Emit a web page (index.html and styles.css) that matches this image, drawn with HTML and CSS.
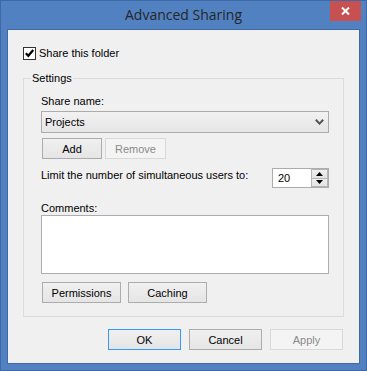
FILE: index.html
```html
<!DOCTYPE html>
<html lang="en">
<head>
    <meta charset="UTF-8">
    <meta name="viewport" content="width=device-width, initial-scale=1.0">
    <title>Advanced Sharing</title>
    <link rel="stylesheet" href="styles.css">
</head>
<body>

    <div class="window">
        <!-- Title bar -->
        <div class="titlebar">
            <span class="title">Advanced Sharing</span>
            <button class="close" aria-label="Close">
                <svg width="9" height="8" viewBox="0 0 9 8">
                    <path d="M1 0.5 L8 7.5 M8 0.5 L1 7.5" stroke="#fff" stroke-width="2" fill="none"/>
                </svg>
            </button>
        </div>

        <div class="client">
            <label class="check-row">
                <span class="checkbox">
                    <svg width="11" height="11" viewBox="0 0 11 11">
                        <path d="M1.8 5.2 L4.3 7.8 L9.2 2" stroke="#000" stroke-width="2.2" fill="none"/>
                    </svg>
                </span>
                Share this folder
            </label>

            <fieldset class="group">
                <legend>Settings</legend>

                <div class="field-label">Share name:</div>
                <div class="combo">
                    <span>Projects</span>
                    <svg width="9" height="6" viewBox="0 0 9 6">
                        <path d="M0.8 0.8 L4.5 4.6 L8.2 0.8" stroke="#555" stroke-width="2" fill="none"/>
                    </svg>
                </div>

                <div class="btn-row share-buttons">
                    <button class="btn btn-add">Add</button>
                    <button class="btn btn-remove" disabled>Remove</button>
                </div>

                <div class="limit-row">
                    <span class="limit-label">Limit the number of simultaneous users to:</span>
                    <div class="spin">
                        <span class="spin-value">20</span>
                        <div class="spin-buttons">
                            <span class="spin-btn">
                                <svg width="7" height="4" viewBox="0 0 7 4"><path d="M3.5 0 L7 4 L0 4 Z" fill="#000"/></svg>
                            </span>
                            <span class="spin-btn">
                                <svg width="7" height="4" viewBox="0 0 7 4"><path d="M0 0 L7 0 L3.5 4 Z" fill="#000"/></svg>
                            </span>
                        </div>
                    </div>
                </div>

                <div class="field-label comments-label">Comments:</div>
                <div class="textarea"></div>

                <div class="btn-row perm-buttons">
                    <button class="btn btn-wide">Permissions</button>
                    <button class="btn btn-wide">Caching</button>
                </div>
            </fieldset>

            <div class="dialog-buttons">
                <button class="btn btn-dialog btn-default">OK</button>
                <button class="btn btn-dialog">Cancel</button>
                <button class="btn btn-dialog" disabled>Apply</button>
            </div>
        </div>
    </div>

</body>
</html>
```

FILE: styles.css
```css
/* General Styles */
body {
    margin: 0;
    font-family: "Liberation Sans", Arial, sans-serif;
    font-size: 11px;
    color: #000;
}

/* Window frame */
.window {
    width: 367px;
    height: 371px;
    box-sizing: border-box;
    display: flex;
    flex-direction: column;
    background: #5181c1;
    border: 1px solid #3d6aa6;
}

.titlebar {
    position: relative;
    height: 28px;
    line-height: 28px;
    text-align: center;
}

.title {
    font-family: "Open Sans", "Liberation Sans", sans-serif;
    font-size: 14px;
    color: #262626;
}

.close {
    position: absolute;
    top: 0;
    right: 5px;
    width: 31px;
    height: 20px;
    padding: 0;
    border: none;
    background: #c75050;
    display: flex;
    align-items: center;
    justify-content: center;
}

/* Client area */
.client {
    flex: 1;
    margin: 0 6px 6px;
    padding: 17px 15px 0;
    background: #f0f0f0;
    border: 1px solid #3f6aa5;
}

.check-row {
    display: flex;
    align-items: flex-start;
    gap: 3px;
    height: 13px;
    line-height: 13px;
}

.checkbox {
    width: 13px;
    height: 13px;
    box-sizing: border-box;
    border: 1px solid #333;
    background: #fff;
    display: flex;
    align-items: center;
    justify-content: center;
}

/* Settings group */
.group {
    margin: 12px 0 0;
    padding: 10px 14px 13px 17px;
    min-width: 0;
    border: 1px solid #dcdcdc;
}

.group legend {
    margin-left: -10px;
    padding: 0 1px;
    line-height: 13px;
}

.field-label {
    line-height: 13px;
}

.combo {
    margin-top: 3px;
    height: 22px;
    box-sizing: border-box;
    border: 1px solid #acacac;
    background: linear-gradient(#f2f2f2, #e5e5e5);
    display: flex;
    align-items: center;
    justify-content: space-between;
    padding: 0 4px 0 3px;
}

/* Buttons */
.btn {
    height: 21px;
    box-sizing: border-box;
    padding: 0;
    border: 1px solid #acacac;
    background: linear-gradient(#f0f0f0, #e5e5e5);
    font-family: "Liberation Sans", Arial, sans-serif;
    font-size: 11px;
    color: #000;
}

.btn:disabled {
    border-color: #d9d9d9;
    background: #f4f4f4;
    color: #8a8a8a;
}

.btn-default {
    border-color: #3399ff;
}

.btn-row {
    display: flex;
}

.share-buttons {
    margin-top: 5px;
    padding-left: 1px;
    gap: 3px;
}

.btn-add {
    width: 60px;
}

.btn-remove {
    width: 61px;
}

.limit-row {
    margin-top: 9px;
    display: flex;
    justify-content: space-between;
    align-items: flex-start;
}

.limit-label {
    padding-top: 1px;
    line-height: 13px;
}

.spin {
    width: 57px;
    height: 20px;
    box-sizing: border-box;
    border: 1px solid #acacac;
    background: #fff;
    display: flex;
    justify-content: space-between;
}

.spin-value {
    padding-left: 5px;
    line-height: 18px;
}

.spin-buttons {
    width: 17px;
    display: flex;
    flex-direction: column;
}

.spin-btn {
    flex: 1;
    box-sizing: border-box;
    border: 1px solid #b5b5b5;
    background: linear-gradient(#f0f0f0, #e3e3e3);
    display: flex;
    align-items: center;
    justify-content: center;
}

.spin-btn + .spin-btn {
    border-top: none;
}

.comments-label {
    margin-top: 14px;
}

.textarea {
    height: 59px;
    box-sizing: border-box;
    border: 1px solid #abadb3;
    background: #fff;
}

.perm-buttons {
    margin-top: 8px;
    padding-left: 1px;
    gap: 7px;
}

.btn-wide {
    width: 79px;
}

/* Dialog buttons */
.dialog-buttons {
    margin-top: 12px;
    padding-right: 1px;
    display: flex;
    justify-content: flex-end;
    gap: 8px;
}

.btn-dialog {
    width: 73px;
}
```
